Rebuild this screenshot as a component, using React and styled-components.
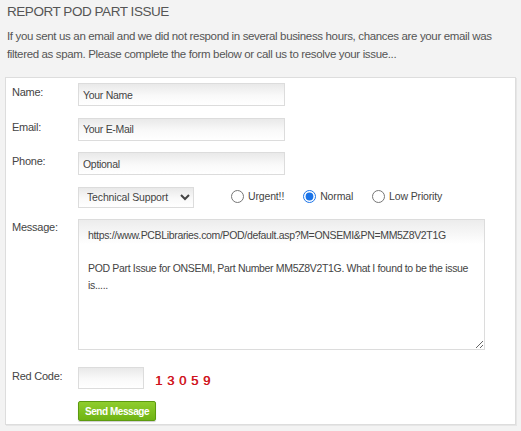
import React, { useState } from 'react';
import styled, { createGlobalStyle } from 'styled-components';

const sans = '"Liberation Sans", Arial, sans-serif';

const GlobalStyle = createGlobalStyle`
  html, body {
    margin: 0;
    padding: 0;
    background: #f3f3f3;
  }
  body {
    font-family: ${sans};
    color: #555;
  }
`;

const Page = styled.div`
  padding: 3px 5px 6px 5px;
  width: 521px;
  box-sizing: border-box;
`;

const Title = styled.h2`
  margin: 0 0 0 2px;
  font-size: 13.5px;
  letter-spacing: -0.45px;
  font-weight: normal;
  color: #555;
  line-height: 17px;
`;

const Intro = styled.p`
  margin: 7px 0 14px 2px;
  font-size: 11.5px;
  letter-spacing: -0.35px;
  line-height: 18px;
  color: #555;
`;

const Panel = styled.form`
  background: #fff;
  border: 1px solid #ddd;
  box-shadow: 1px 1px 0 #e6e6e6;
  padding: 5px 0 3px 6px;
  display: flex;
  flex-direction: column;
  gap: 11.5px;
`;

const Row = styled.div`
  display: grid;
  grid-template-columns: 66px 1fr;
  align-items: start;
  margin-top: ${p => p.push || 0}px;
`;

const Label = styled.label`
  font-size: 11px;
  letter-spacing: -0.25px;
  color: #444;
  padding-top: ${p => p.top ?? 3}px;
`;

const TextInput = styled.input`
  box-sizing: border-box;
  width: ${p => p.w || 207}px;
  height: ${p => p.h || 23}px;
  border: 1px solid #dcdcdc;
  background: linear-gradient(to bottom, #e9e9e9 0%, #f9f9f9 55%, #fff 100%);
  font-family: ${sans};
  font-size: 10.5px;
  letter-spacing: -0.3px;
  color: #444;
  padding: 0 0 0 4px;
  outline: none;
  &::placeholder {
    color: #444;
  }
`;

const Options = styled.div`
  display: flex;
  align-items: center;
`;

const Select = styled.select`
  box-sizing: border-box;
  width: 116px;
  height: 21px;
  border: 1px solid #dcdcdc;
  background: linear-gradient(to bottom, #e9e9e9 0%, #f9f9f9 55%, #fff 100%);
  font-family: ${sans};
  font-size: 10.5px;
  letter-spacing: -0.15px;
  color: #444;
  padding: 0 2px 0 4px;
  margin-right: 37px;
`;

const Radio = styled.label`
  display: flex;
  align-items: center;
  font-size: 10.5px;
  letter-spacing: -0.15px;
  color: #444;
  margin-right: ${p => p.gap || 0}px;
  margin-top: -2px;
  input {
    margin: 0 4px 0 0;
    width: 13px;
    height: 13px;
    accent-color: #1a73e8;
  }
`;

const MessageArea = styled.textarea`
  box-sizing: border-box;
  width: 407px;
  height: 131px;
  border: 1px solid #dcdcdc;
  background: linear-gradient(to bottom, #ececec 0px, #fff 24px, #fff 100%);
  font-family: ${sans};
  font-size: 10.5px;
  letter-spacing: -0.33px;
  line-height: 16.5px;
  color: #444;
  padding: 7px 7px 7px 9px;
  resize: both;
  outline: none;
`;

const CodeLine = styled.div`
  display: flex;
  align-items: center;
  gap: 11px;
`;

const Captcha = styled.span`
  font-family: ${sans};
  font-size: 13px;
  color: #d0141c;
  letter-spacing: 4.8px;
  margin-top: 5px;
  text-shadow: 0.4px 0 0 #d0141c;
`;

const SendButton = styled.button`
  width: 78px;
  height: 20px;
  border: 1px solid #5c9a0f;
  border-radius: 2px;
  background: linear-gradient(to bottom, #8fcd2d 0%, #6fb414 100%);
  box-shadow: 0 1px 1px rgba(0, 0, 0, 0.2);
  color: #fff;
  font-family: ${sans};
  font-weight: bold;
  font-size: 10px;
  letter-spacing: -0.45px;
  white-space: nowrap;
  padding: 0;
  cursor: pointer;
`;

const message =
  'https://www.PCBLibraries.com/POD/default.asp?M=ONSEMI&PN=MM5Z8V2T1G\n\n' +
  'POD Part Issue for ONSEMI, Part Number MM5Z8V2T1G. What I found to be the issue is.....';

export default function App() {
  const [priority, setPriority] = useState('normal');

  return (
    <Page>
      <GlobalStyle />
      <Title>REPORT POD PART ISSUE</Title>
      <Intro>
        If you sent us an email and we did not respond in several business hours, chances are your email was
        filtered as spam. Please complete the form below or call us to resolve your issue...
      </Intro>
      <Panel onSubmit={e => e.preventDefault()}>
        <Row>
          <Label>Name:</Label>
          <TextInput placeholder="Your Name" />
        </Row>
        <Row>
          <Label>Email:</Label>
          <TextInput placeholder="Your E-Mail" />
        </Row>
        <Row>
          <Label>Phone:</Label>
          <TextInput placeholder="Optional" />
        </Row>
        <Row>
          <span />
          <Options>
            <Select defaultValue="tech">
              <option value="tech">Technical Support</option>
              <option value="sales">Sales</option>
            </Select>
            <Radio gap={19}>
              <input type="radio" name="prio" checked={priority === 'urgent'} onChange={() => setPriority('urgent')} />
              Urgent!!
            </Radio>
            <Radio gap={19}>
              <input type="radio" name="prio" checked={priority === 'normal'} onChange={() => setPriority('normal')} />
              Normal
            </Radio>
            <Radio>
              <input type="radio" name="prio" checked={priority === 'low'} onChange={() => setPriority('low')} />
              Low Priority
            </Radio>
          </Options>
        </Row>
        <Row>
          <Label top={2}>Message:</Label>
          <MessageArea defaultValue={message} />
        </Row>
        <Row push={5}>
          <Label top={3}>Red Code:</Label>
          <CodeLine>
            <TextInput w={66} h={22} />
            <Captcha>13059</Captcha>
          </CodeLine>
        </Row>
        <Row push={1}>
          <span />
          <SendButton type="submit">Send Message</SendButton>
        </Row>
      </Panel>
    </Page>
  );
}
